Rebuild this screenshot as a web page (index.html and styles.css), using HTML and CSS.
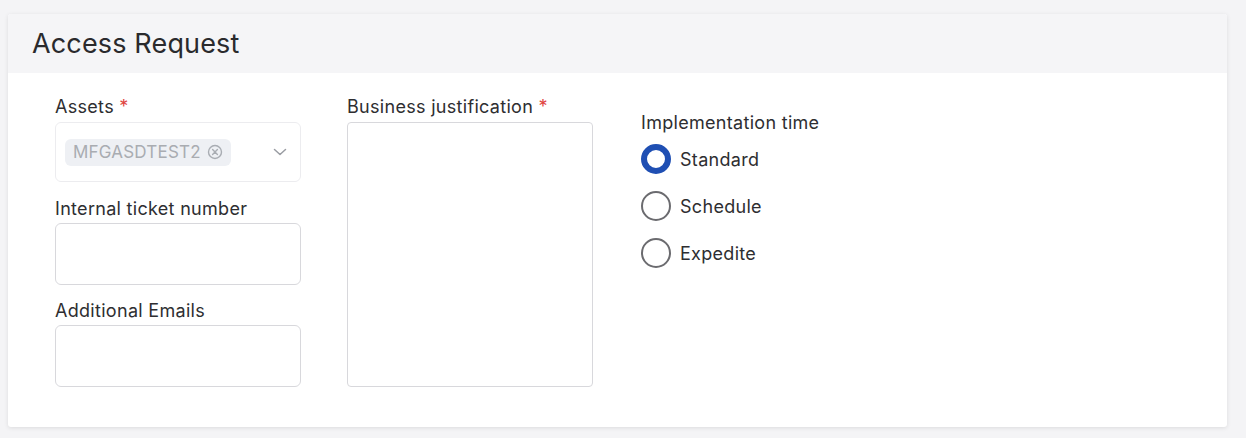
FILE: index.html
```html
<!DOCTYPE html>
<html>
<head>
<meta charset="utf-8">
<link rel="stylesheet" href="styles.css">
</head>
<body>
<div class="card">
  <div class="card-header"><h1 class="title">Access Request</h1></div>
  <div class="card-body">
    <div class="col">
      <div class="field">
        <label class="label">Assets <span class="req">*</span></label>
        <div class="select">
          <span class="chip">MFGASDTEST2
            <svg class="chip-x" width="16" height="16" viewBox="0 0 16 16"><circle cx="8" cy="8" r="6.5" fill="none" stroke="#a9adb3" stroke-width="1.4"/><path d="M5.6 5.6 L10.4 10.4 M10.4 5.6 L5.6 10.4" stroke="#a9adb3" stroke-width="1.4" stroke-linecap="round"/></svg>
          </span>
          <svg class="chev" width="14" height="10" viewBox="0 0 14 10"><path d="M1.5 2.5 L7 7.5 L12.5 2.5" fill="none" stroke="#9a9da3" stroke-width="1.5" stroke-linecap="round" stroke-linejoin="round"/></svg>
        </div>
      </div>
      <div class="field">
        <label class="label">Internal ticket number</label>
        <div class="input"></div>
      </div>
      <div class="field">
        <label class="label">Additional Emails</label>
        <div class="input input-last"></div>
      </div>
    </div>
    <div class="col">
      <div class="field">
        <label class="label">Business justification <span class="req">*</span></label>
        <div class="textarea"></div>
      </div>
    </div>
    <div class="col col3">
      <div class="label label-radio">Implementation time</div>
      <div class="radios">
        <div class="radio-row"><span class="radio checked"></span><span class="radio-text">Standard</span></div>
        <div class="radio-row"><span class="radio"></span><span class="radio-text">Schedule</span></div>
        <div class="radio-row"><span class="radio"></span><span class="radio-text">Expedite</span></div>
      </div>
    </div>
  </div>
</div>
</body>
</html>
```
FILE: styles.css
```css
html, body {
  margin: 0;
  padding: 0;
  background: #f4f4f6;
  font-family: Inter, "Noto Sans", "Liberation Sans", sans-serif;
  color: #2b2b2e;
}
body {
  padding: 14px 19px 11px 8px;
}
.card {
  background: #ffffff;
  border-radius: 3px;
  box-shadow: 0 1px 4px rgba(0,0,0,0.10);
  overflow: hidden;
  height: 413px;
}
.card-header {
  background: #f5f5f7;
  height: 59px;
  display: flex;
  align-items: center;
  padding-left: 24px;
}
.title {
  margin: 0;
  font-size: 27px;
  font-weight: 400;
  color: #2a2a2d;
  letter-spacing: 0.15px;
}
.card-body {
  display: flex;
  gap: 46px;
  padding: 24px 0 0 47px;
}
.col {
  width: 246px;
  display: flex;
  flex-direction: column;
}
.field {
  display: flex;
  flex-direction: column;
}
.label {
  font-size: 18px;
  line-height: 20px;
  color: #2e2e31;
  margin-bottom: 5px;
  letter-spacing: 0.3px;
}
.req { color: #e0443f; }
.select {
  height: 60px;
  box-sizing: border-box;
  border: 1px solid #ececef;
  border-radius: 6px;
  display: flex;
  align-items: center;
  justify-content: space-between;
  padding: 0 13px 0 9px;
  margin-bottom: 17px;
}
.chip {
  display: flex;
  align-items: center;
  gap: 6px;
  height: 27px;
  padding: 0 8px;
  background: #eef0f4;
  border-radius: 6px;
  font-size: 17px;
  letter-spacing: 0.2px;
  color: #a9acb1;
}
.input {
  height: 62px;
  box-sizing: border-box;
  border: 1px solid #d8d8dc;
  border-radius: 6px;
  margin-top: -1px;
  margin-bottom: 16px;
}
.input-last {
  margin-bottom: 0;
}
.textarea {
  height: 265px;
  box-sizing: border-box;
  border: 1px solid #d8d8dc;
  border-radius: 4px;
}
.col3 {
  padding-top: 16px;
  padding-left: 2px;
}
.label-radio { margin-bottom: 11px; }
.radios {
  display: flex;
  flex-direction: column;
  gap: 17px;
}
.radio-row {
  display: flex;
  align-items: center;
  gap: 9px;
}
.radio {
  width: 30px;
  height: 30px;
  box-sizing: border-box;
  border: 2px solid #6b6b6f;
  border-radius: 50%;
}
.radio.checked {
  border: 6px solid #1f4fb3;
}
.radio-text {
  font-size: 18px;
  letter-spacing: 0.3px;
  color: #2e2e31;
}
```
